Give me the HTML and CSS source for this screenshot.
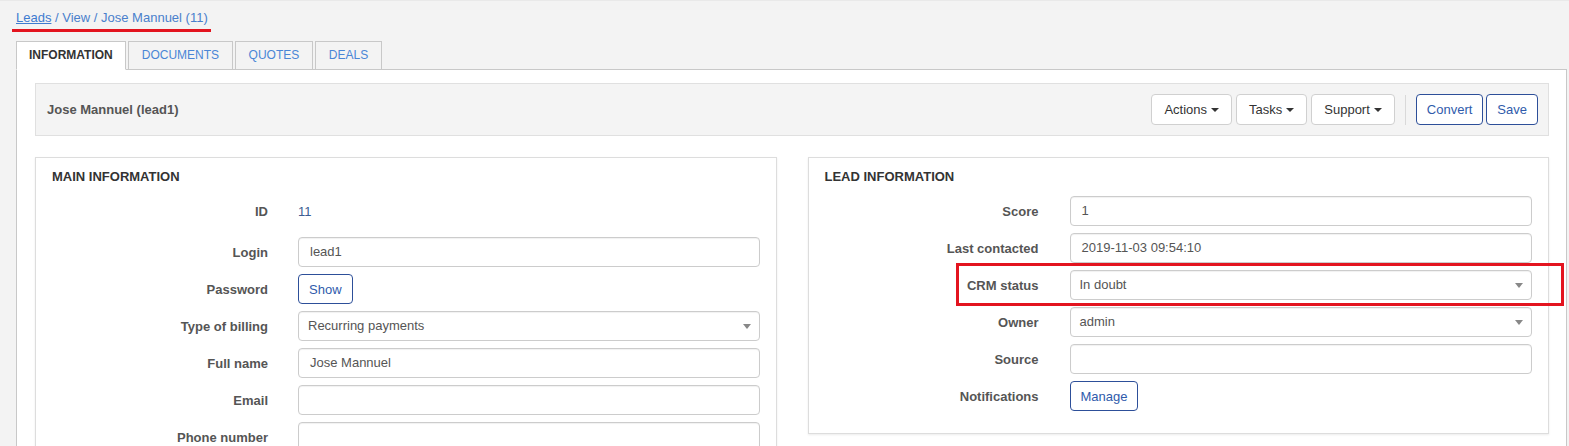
FILE: index.html
```html
<!DOCTYPE html>
<html lang="en">
<head>
<meta charset="utf-8">
<title>Leads / View / Jose Mannuel (11)</title>
<link rel="stylesheet" href="styles.css">
</head>
<body>
<div class="page">
  <div class="crumbs"><a class="crumb-link" href="#">Leads</a> / View / Jose Mannuel (11)</div>

  <div class="tabs">
    <div class="tab active">INFORMATION</div>
    <div class="tab">DOCUMENTS</div>
    <div class="tab">QUOTES</div>
    <div class="tab">DEALS</div>
  </div>

  <div class="panel">
    <div class="bar">
      <div class="bar-title">Jose Mannuel (lead1)</div>
      <div class="bar-actions">
        <button class="btn">Actions<span class="caret"></span></button>
        <button class="btn">Tasks<span class="caret"></span></button>
        <button class="btn">Support<span class="caret"></span></button>
        <span class="sep"></span>
        <button class="btn btn-primary">Convert</button>
        <button class="btn btn-primary">Save</button>
      </div>
    </div>

    <div class="cards">
      <div class="card">
        <div class="card-title">MAIN INFORMATION</div>
        <div class="row row-static">
          <div class="label">ID</div>
          <div class="static">11</div>
        </div>
        <div class="row">
          <div class="label">Login</div>
          <div class="control">lead1</div>
        </div>
        <div class="row">
          <div class="label">Password</div>
          <div><button class="btn-outline">Show</button></div>
        </div>
        <div class="row">
          <div class="label">Type of billing</div>
          <div class="control select">Recurring payments<span class="arrow"></span></div>
        </div>
        <div class="row">
          <div class="label">Full name</div>
          <div class="control">Jose Mannuel</div>
        </div>
        <div class="row">
          <div class="label">Email</div>
          <div class="control"></div>
        </div>
        <div class="row">
          <div class="label">Phone number</div>
          <div class="control"></div>
        </div>
      </div>

      <div class="card card-right">
        <div class="card-title">LEAD INFORMATION</div>
        <div class="row">
          <div class="label">Score</div>
          <div class="control">1</div>
        </div>
        <div class="row">
          <div class="label">Last contacted</div>
          <div class="control">2019-11-03 09:54:10</div>
        </div>
        <div class="row row-marked">
          <div class="label">CRM status</div>
          <div class="control select">In doubt<span class="arrow"></span></div>
          <span class="highlight"></span>
        </div>
        <div class="row">
          <div class="label">Owner</div>
          <div class="control select">admin<span class="arrow"></span></div>
        </div>
        <div class="row">
          <div class="label">Source</div>
          <div class="control"></div>
        </div>
        <div class="row">
          <div class="label">Notifications</div>
          <div><button class="btn-outline">Manage</button></div>
        </div>
      </div>
    </div>
  </div>
</div>
</body>
</html>
```

FILE: styles.css
```css
* { box-sizing: border-box; }

html, body {
  margin: 0;
  padding: 0;
  height: 100%;
  overflow: hidden;
}

body {
  background: #f3f3f3;
  font-family: "Liberation Sans", Arial, sans-serif;
  font-size: 13px;
  color: #555;
  border-top: 1px solid #e9e9e9;
}

.page {
  padding: 0 2px 0 16px;
}

.crumbs {
  display: inline-block;
  margin-left: -4px;
  padding: 8px 3px 2px 4px;
  line-height: 18px;
  border-bottom: 3px solid #e3141f;
  color: #4a80cc;
}

.crumb-link {
  color: #3e7bd0;
  text-decoration: underline;
}

.tabs {
  display: flex;
  gap: 2px;
  margin-top: 9px;
  margin-bottom: -1px;
  position: relative;
  z-index: 1;
}

.tab {
  height: 29px;
  padding: 0 12.5px;
  line-height: 27px;
  font-size: 12px;
  color: #4a86d6;
  background: #f3f3f3;
  border: 1px solid #c8c8c8;
}

.tab + .tab {
  margin-left: 0.5px;
}

.tab.active {
  padding: 0 12px;
  background: #fff;
  color: #333;
  font-weight: bold;
  border-bottom-color: #fff;
}

.panel {
  background: #fff;
  border: 1px solid #c8c8c8;
  padding: 13px 17px 20px 18px;
}

.bar {
  height: 53px;
  display: flex;
  align-items: center;
  justify-content: space-between;
  padding: 0 10px 0 11px;
  background: #f4f4f4;
  border: 1px solid #e0e0e0;
}

.bar-title {
  font-weight: bold;
  color: #555;
  font-size: 13px;
}

.bar-actions {
  display: flex;
  align-items: center;
  gap: 4px;
}

.btn {
  height: 31px;
  padding: 0 12px;
  font-family: inherit;
  font-size: 13px;
  color: #333;
  background: #fff;
  border: 1px solid #d0d0d0;
  border-radius: 4px;
  display: inline-flex;
  align-items: center;
}

.caret {
  display: inline-block;
  margin-left: 4px;
  width: 0;
  height: 0;
  border-top: 4px solid #333;
  border-left: 4px solid transparent;
  border-right: 4px solid transparent;
}

.sep {
  width: 1px;
  height: 30px;
  background: #d9d9d9;
  margin: 0 6px;
}

.btn-primary {
  padding: 0 10px;
  color: #2f5bab;
  border-color: #2d4f99;
}

.bar-actions .btn-primary + .btn-primary {
  margin-left: -1px;
}

.cards {
  display: grid;
  grid-template-columns: 1fr 1fr;
  column-gap: 31px;
  align-items: start;
  margin-top: 21px;
}

.card {
  background: #fff;
  border: 1px solid #ddd;
  box-shadow: 0 1px 2px rgba(0, 0, 0, 0.08);
  padding: 11px 16px 22px;
}

.card-title {
  font-weight: bold;
  color: #333;
  font-size: 13px;
  line-height: 16px;
  margin-bottom: 11px;
}

.row {
  display: grid;
  grid-template-columns: 216px 1fr;
  column-gap: 30px;
  align-items: center;
  min-height: 30px;
  margin-bottom: 7px;
}

.card-right .row {
  grid-template-columns: 214px 1fr;
  column-gap: 31px;
}

.row:last-child {
  margin-bottom: 0;
}

.row-static {
  margin-bottom: 11px;
}

.label {
  text-align: right;
  font-weight: bold;
  color: #555;
}

.static {
  color: #3b5c92;
}

.control {
  position: relative;
  height: 30px;
  line-height: 28px;
  padding: 0 11px;
  border: 1px solid #ccc;
  border-radius: 4px;
  background: #fff;
  color: #555;
  box-shadow: inset 0 1px 1px rgba(0, 0, 0, 0.06);
  white-space: nowrap;
}

.select {
  padding-left: 9px;
}

.arrow {
  position: absolute;
  right: 8px;
  top: 12px;
  width: 0;
  height: 0;
  border-top: 5px solid #888;
  border-left: 4px solid transparent;
  border-right: 4px solid transparent;
}

.btn-outline {
  height: 30px;
  padding: 0 10px;
  font-family: inherit;
  font-size: 13px;
  color: #2f5bab;
  background: #fff;
  border: 1px solid #2d4f99;
  border-radius: 4px;
}

.row-marked {
  position: relative;
}

.highlight {
  position: absolute;
  left: 131px;
  right: -32px;
  top: -7px;
  bottom: -6px;
  border: 3px solid #e3141f;
  pointer-events: none;
}
```
